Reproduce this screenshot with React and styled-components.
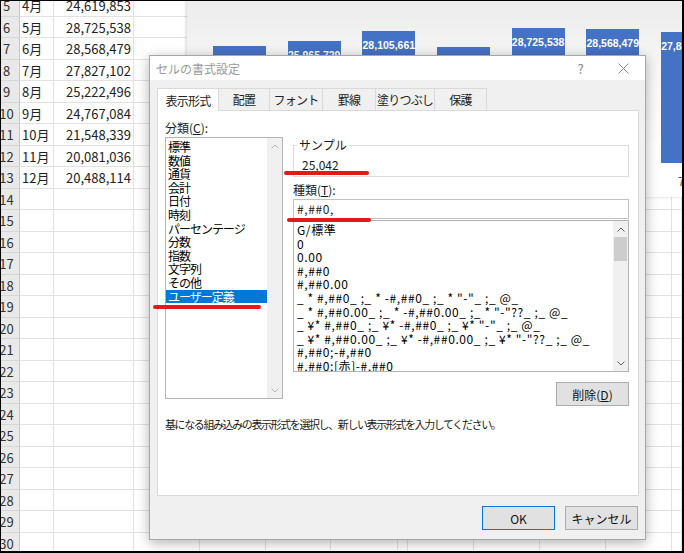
import React from "react";
import styled, { createGlobalStyle } from "styled-components";

const UI = `"Noto Sans CJK JP", "Noto Sans", sans-serif`;

const GlobalStyle = createGlobalStyle`
  html, body { margin: 0; padding: 0; background: #fff; }
  body { font-family: ${UI}; }
`;

const sheetRows = Array.from({ length: 26 }, (_, i) => i + 5);
const monthly = {
  5: ["4月", "24,619,853"],
  6: ["5月", "28,725,538"],
  7: ["6月", "28,568,479"],
  8: ["7月", "27,827,102"],
  9: ["8月", "25,222,496"],
  10: ["9月", "24,767,084"],
  11: ["10月", "21,548,339"],
  12: ["11月", "20,081,036"],
  13: ["12月", "20,488,114"],
};
const colWidths = [34, 80, 66, 66, 65, 67, 10, 66, 66, 66, 66];

const bars = [
  { m: "1月", v: 24912730 },
  { m: "2月", v: 25965729 },
  { m: "3月", v: 28105661 },
  { m: "4月", v: 24619853 },
  { m: "5月", v: 28725538 },
  { m: "6月", v: 28568479 },
  { m: "7月", v: 27827102 },
];

const categories = [
  "標準", "数値", "通貨", "会計", "日付", "時刻", "パーセンテージ",
  "分数", "指数", "文字列", "その他", "ユーザー定義",
];

const formats = [
  "G/標準",
  "0",
  "0.00",
  "#,##0",
  "#,##0.00",
  '_ * #,##0_ ;_ * -#,##0_ ;_ * "-"_ ;_ @_',
  '_ * #,##0.00_ ;_ * -#,##0.00_ ;_ * "-"??_ ;_ @_',
  '_ ¥* #,##0_ ;_ ¥* -#,##0_ ;_ ¥* "-"_ ;_ @_',
  '_ ¥* #,##0.00_ ;_ ¥* -#,##0.00_ ;_ ¥* "-"??_ ;_ @_',
  "#,##0;-#,##0",
  "#,##0;[赤]-#,##0",
];

const tabs = [
  { label: "表示形式", w: 62 },
  { label: "配置", w: 52 },
  { label: "フォント", w: 54 },
  { label: "罫線", w: 54 },
  { label: "塗りつぶし", w: 60 },
  { label: "保護", w: 53 },
];

const Frame = styled.div`
  position: relative;
  width: 684px;
  height: 553px;
  box-sizing: border-box;
  border-style: solid;
  border-color: #000;
  border-width: 1px 2px 2px 1px;
  overflow: hidden;
  background: #fff;
`;

/* spreadsheet */
const Sheet = styled.div`
  margin-top: -5.75px;
  font: 13px ${UI};
  color: #222;
`;

const SheetRow = styled.div`
  display: grid;
  grid-template-columns: 19px ${colWidths.map((w) => w + "px").join(" ")} 1fr;
  height: 21.5px;
`;

const RowHead = styled.div`
  display: flex;
  align-items: center;
  justify-content: center;
  padding-right: 7px;
  background: #e9e9e9;
  border-right: 1px solid #c6c6c6;
  border-bottom: 1px solid #d6d6d6;
  color: #333;
  white-space: nowrap;
`;

const Cell = styled.div`
  display: flex;
  align-items: center;
  justify-content: ${(p) => (p.$right ? "flex-end" : "flex-start")};
  padding: 0 2px;
  border-right: 1px solid #e2e2e2;
  border-bottom: 1px solid #e2e2e2;
  white-space: nowrap;
  overflow: hidden;
`;

/* chart */
const Chart = styled.div`
  position: absolute;
  left: 186px;
  top: 0;
  width: 496px;
  height: 196px;
  display: flex;
  flex-direction: column;
  overflow: hidden;
  background: linear-gradient(#ececec, #f7f7f7 35%, #fff 75%);
  box-shadow: -1px 0 3px rgba(0, 0, 0, 0.18);
`;

const Plot = styled.div`
  height: 162px;
  display: flex;
  align-items: flex-end;
  gap: 21.67px;
  padding-left: 26px;
`;

const Bar = styled.div`
  flex: none;
  width: 53px;
  display: flex;
  justify-content: center;
  background: #4472c4;
`;

const BarLabel = styled.span`
  margin-top: 8px;
  font: bold 10.5px "Liberation Sans", sans-serif;
  line-height: 12px;
  color: #fff;
  white-space: nowrap;
`;

const Axis = styled.div`
  display: flex;
  gap: 21.67px;
  padding-left: 26px;
`;

const AxisLabel = styled.div`
  flex: none;
  width: 53px;
  padding-top: 9px;
  text-align: center;
  font: 12px ${UI};
  color: #595959;
  white-space: nowrap;
`;

/* dialog */
const Dialog = styled.div`
  position: absolute;
  left: 148px;
  top: 54px;
  width: 497px;
  height: 485px;
  box-sizing: border-box;
  display: flex;
  flex-direction: column;
  border: 1px solid #a6a6a6;
  background: #f0f0f0;
  box-shadow: 0 3px 12px rgba(0, 0, 0, 0.3);
  font: 12px ${UI};
  color: #1a1a1a;
`;

const TitleBar = styled.div`
  height: 24px;
  flex: none;
  display: flex;
  align-items: center;
  padding-left: 6px;
  background: #fff;
  color: #999;
`;

const Title = styled.div`
  flex: 1;
`;

const TitleButton = styled.div`
  width: 43px;
  height: 24px;
  display: flex;
  align-items: center;
  justify-content: center;
  color: #888;
  font-size: 13px;
`;

const TabStrip = styled.div`
  display: flex;
  align-items: flex-end;
  height: 22px;
  margin: 8px 0 0 7px;
  position: relative;
  z-index: 1;
`;

const Tab = styled.div`
  flex: none;
  width: ${(p) => p.$w}px;
  height: ${(p) => (p.$active ? 23 : 22)}px;
  margin-bottom: ${(p) => (p.$active ? -1 : 0)}px;
  margin-left: ${(p) => (p.$first ? 0 : -1)}px;
  box-sizing: border-box;
  display: flex;
  align-items: center;
  justify-content: center;
  border: 1px solid #d9d9d9;
  border-bottom: 0;
  background: ${(p) => (p.$active ? "#fff" : "#f0f0f0")};
  letter-spacing: -0.8px;
  white-space: nowrap;
  color: #222;
`;

const Panel = styled.div`
  height: 386px;
  flex: none;
  box-sizing: border-box;
  margin: 0 6px 0 7px;
  padding: 9px 9px 0 7px;
  background: #fff;
  border: 1px solid #d9d9d9;
`;

const Label = styled.div`
  line-height: 16px;
  margin-bottom: ${(p) => p.$mb || 0}px;
  margin-top: ${(p) => p.$mt || 0}px;
`;

const Columns = styled.div`
  display: grid;
  grid-template-columns: 118px 336px;
  gap: 10px;
  align-items: start;
`;

const ListBox = styled.div`
  height: ${(p) => p.$h}px;
  box-sizing: border-box;
  margin-top: ${(p) => p.$mt || 0}px;
  display: flex;
  border: 1px solid #b4b4b4;
  background: #fff;
  overflow: hidden;
`;

const Items = styled.div`
  flex: 1;
  min-width: 0;
  padding-top: 2px;
  overflow: hidden;
  letter-spacing: ${(p) => p.$ls}px;
`;

const Item = styled.div`
  line-height: 13.6px;
  height: 13.6px;
  padding-left: ${(p) => p.$pl}px;
  white-space: pre;
  color: ${(p) => (p.$selected ? "#fff" : "#000")};
  background: ${(p) => (p.$selected ? "#0078d7" : "transparent")};
`;

const Scroll = styled.div`
  flex: none;
  width: 15px;
  display: flex;
  flex-direction: column;
  background: #f0f0f0;
`;

const Arrow = styled.div`
  height: 16px;
  flex: none;
  display: flex;
  align-items: center;
  justify-content: center;
`;

const Thumb = styled.div`
  height: 24px;
  flex: none;
  margin: 0 1px;
  background: #cdcdcd;
`;

const Track = styled.div`
  flex: 1;
`;

const Sample = styled.fieldset`
  margin: 0;
  min-width: 0;
  padding: 4px 8px 3px;
  border: 1px solid #dcdcdc;
  line-height: 16px;
`;

const Legend = styled.legend`
  padding: 0 2px;
  margin-left: -5px;
  line-height: 16px;
`;

const TypeInput = styled.div`
  height: 20px;
  box-sizing: border-box;
  margin-top: 1px;
  padding-left: 3px;
  border: 1px solid #c2c2c2;
  line-height: 18px;
  letter-spacing: 0.6px;
`;

const ButtonRow = styled.div`
  display: flex;
  justify-content: flex-end;
  gap: 10px;
  margin-top: ${(p) => p.$mt || 0}px;
  padding-right: ${(p) => p.$pr || 0}px;
`;

const Button = styled.div`
  width: 73px;
  height: 24px;
  box-sizing: border-box;
  display: flex;
  align-items: center;
  justify-content: center;
  background: #e1e1e1;
  border: 1px solid ${(p) => (p.$primary ? "#0078d7" : "#adadad")};
  color: #111;
`;

const Hint = styled.div`
  margin-top: 11px;
  font-size: 11px;
  line-height: 15px;
  letter-spacing: -1.4px;
  white-space: nowrap;
`;

const Footer = styled.div`
  flex: none;
  padding-top: 10px;
`;

const Marker = styled.div`
  position: absolute;
  height: 4px;
  border-radius: 2px;
  background: #e3191b;
`;

const Chevron = ({ down, color }) => (
  <svg width="8" height="5" viewBox="0 0 8 5">
    <polyline
      points={down ? "0.5,0.5 4,4 7.5,0.5" : "0.5,4.5 4,1 7.5,4.5"}
      fill="none"
      stroke={color}
      strokeWidth="1"
    />
  </svg>
);

const CloseIcon = () => (
  <svg width="11" height="11" viewBox="0 0 11 11">
    <path d="M0.5 0.5L10.5 10.5M10.5 0.5L0.5 10.5" stroke="#8a8a8a" strokeWidth="1" />
  </svg>
);

const maxV = 28725538;

export default function App() {
  return (
    <>
      <GlobalStyle />
      <Frame>
        <Sheet>
          {sheetRows.map((r) => (
            <SheetRow key={r}>
              <RowHead>{r}</RowHead>
              <Cell>{monthly[r] ? monthly[r][0] : ""}</Cell>
              <Cell $right>{monthly[r] ? monthly[r][1] : ""}</Cell>
              {colWidths.slice(2).map((_, i) => (
                <Cell key={i} />
              ))}
              <Cell />
            </SheetRow>
          ))}
        </Sheet>

        <Chart>
          <Plot>
            {bars.map((b) => (
              <Bar key={b.m} style={{ height: (b.v / maxV) * 135 }}>
                <BarLabel>{b.v.toLocaleString("en-US")}</BarLabel>
              </Bar>
            ))}
          </Plot>
          <Axis>
            {bars.map((b) => (
              <AxisLabel key={b.m}>{b.m}</AxisLabel>
            ))}
          </Axis>
        </Chart>

        <Dialog>
          <TitleBar>
            <Title>セルの書式設定</Title>
            <TitleButton>?</TitleButton>
            <TitleButton>
              <CloseIcon />
            </TitleButton>
          </TitleBar>

          <TabStrip>
            {tabs.map((t, i) => (
              <Tab key={t.label} $w={t.w} $active={i === 0} $first={i === 0}>
                {t.label}
              </Tab>
            ))}
          </TabStrip>

          <Panel>
            <Label $mb={1}>
              分類(<u>C</u>):
            </Label>
            <Columns>
              <ListBox $h={262}>
                <Items $ls={-1}>
                  {categories.map((c) => (
                    <Item key={c} $pl={2} $selected={c === "ユーザー定義"}>
                      {c}
                    </Item>
                  ))}
                </Items>
                <Scroll>
                  <Arrow>
                    <Chevron color="#b8b8b8" />
                  </Arrow>
                  <Track />
                  <Arrow>
                    <Chevron down color="#b8b8b8" />
                  </Arrow>
                </Scroll>
              </ListBox>

              <div>
                <Sample>
                  <Legend>サンプル</Legend>
                  25,042
                </Sample>
                <Label $mt={5}>
                  種類(<u>T</u>):
                </Label>
                <TypeInput>#,##0,</TypeInput>
                <ListBox $h={152} $mt={1}>
                  <Items $ls={0.6}>
                    {formats.map((f) => (
                      <Item key={f} $pl={3}>
                        {f}
                      </Item>
                    ))}
                  </Items>
                  <Scroll>
                    <Arrow>
                      <Chevron color="#606060" />
                    </Arrow>
                    <Thumb />
                    <Track />
                    <Arrow>
                      <Chevron down color="#606060" />
                    </Arrow>
                  </Scroll>
                </ListBox>
                <ButtonRow $mt={10}>
                  <Button>
                    削除(<u>D</u>)
                  </Button>
                </ButtonRow>
              </div>
            </Columns>
            <Hint>基になる組み込みの表示形式を選択し、新しい表示形式を入力してください。</Hint>
          </Panel>

          <Footer>
            <ButtonRow $pr={7}>
              <Button $primary>OK</Button>
              <Button>キャンセル</Button>
            </ButtonRow>
          </Footer>
        </Dialog>

        <Marker style={{ left: 152, top: 304, width: 108 }} />
        <Marker style={{ left: 283, top: 170, width: 85 }} />
        <Marker style={{ left: 286, top: 217, width: 84 }} />
      </Frame>
    </>
  );
}
